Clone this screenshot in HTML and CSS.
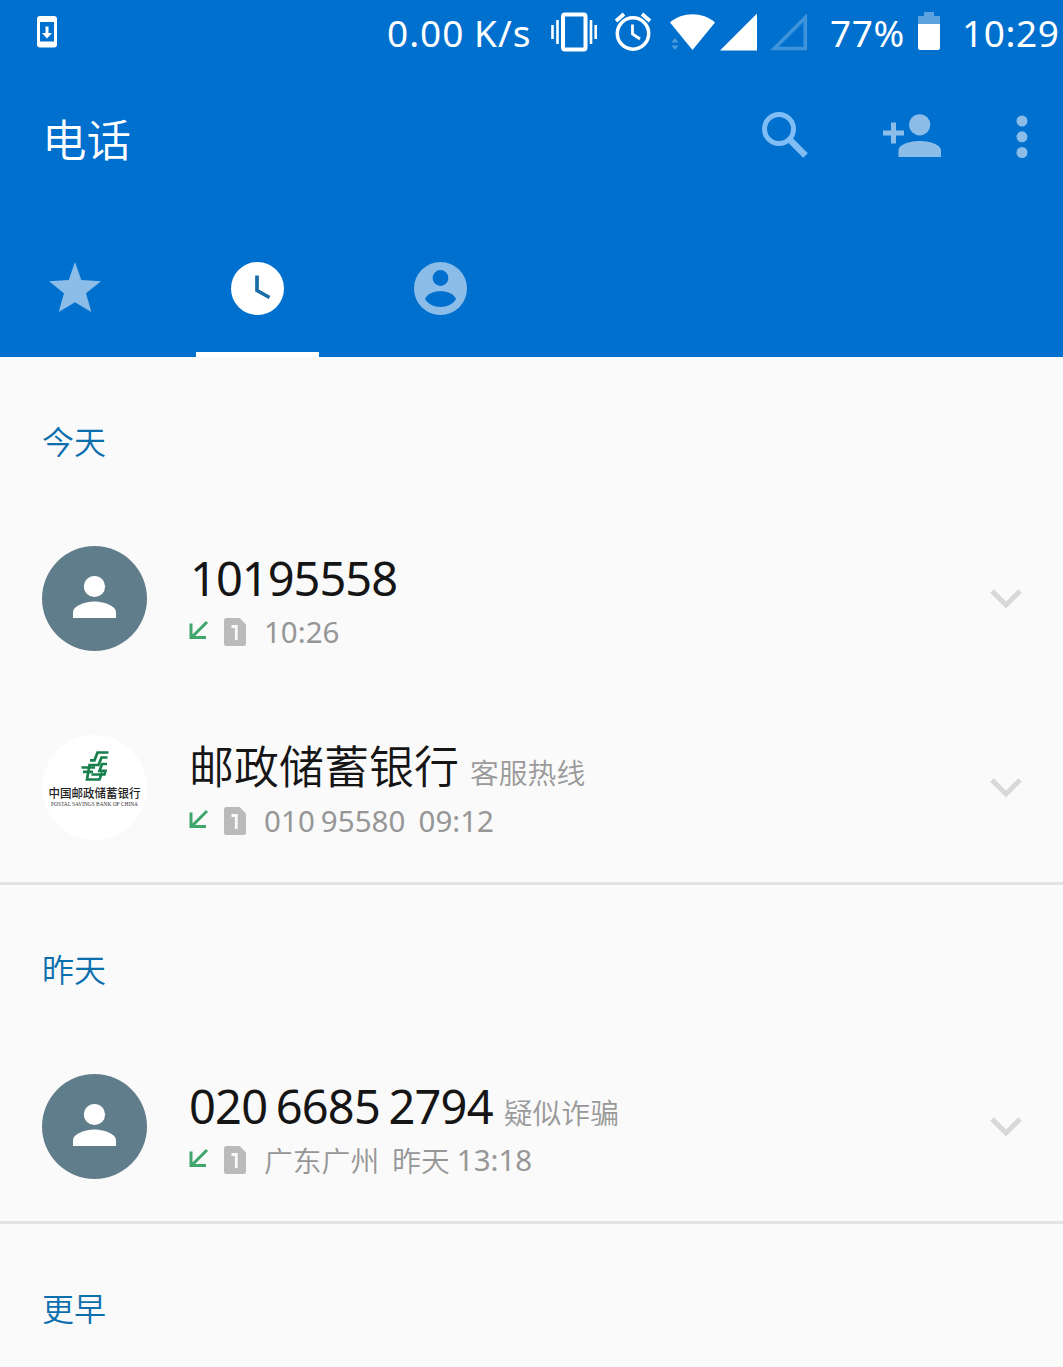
FILE: index.html
```html
<!DOCTYPE html>
<html lang="zh-CN">
<head>
<meta charset="utf-8">
<title>电话</title>
<link rel="stylesheet" href="styles.css">
</head>
<body>
<svg class="defs" aria-hidden="true">
  <symbol id="person" viewBox="0 0 105 105">
    <circle cx="52.5" cy="40.5" r="10.6"/>
    <path d="M31 72V66.500C31 59 45 55.500 52.500 55.500S74 59 74 66.500V72Z"/>
  </symbol>
  <symbol id="incoming" viewBox="0 0 20 20">
    <path d="M18 2L3 17M2 3.500V17.500H17" fill="none" stroke="#3fa66b" stroke-width="3"/>
  </symbol>
  <symbol id="sim" viewBox="0 0 22 28">
    <path d="M2.500 0H15.500L22 6.500V25.500Q22 28 19.500 28H2.500Q0 28 0 25.500V2.500Q0 0 2.500 0Z" fill="#bababa"/>
    <path d="M7.500 8.500H12.300V22" fill="none" stroke="#fafafa" stroke-width="2.800"/>
  </symbol>
  <symbol id="chevron" viewBox="0 0 32 20">
    <path d="M2 2L16 16L30 2" fill="none" stroke="#d8d8d8" stroke-width="5"/>
  </symbol>
</svg>

<header class="header">
  <div class="status">
    <svg class="st-update" width="20" height="32" viewBox="0 0 20 32"><rect width="20" height="31.500" rx="3" fill="#fff"/><rect x="3" y="6" width="14" height="19.500" fill="#0070cf"/><path d="M8.500 10.500H11.500V17H15L10 22.500L5 17H8.500Z" fill="#fff"/></svg>
    <span class="st-text st-speed">0.00 K/s</span>
    <svg class="st-vibrate" width="46" height="40" viewBox="0 0 46 40" fill="none" stroke="#fff"><rect x="12" y="2.500" width="22.500" height="35" rx="2" stroke-width="4"/><path d="M1.500 13V27M6.500 8V32M40 8V32M44.700 13V27" stroke-width="2.600"/></svg>
    <svg class="st-alarm" width="38" height="40" viewBox="0 0 38 40" fill="none" stroke="#fff"><circle cx="19" cy="21.500" r="15.700" stroke-width="3.500"/><path d="M18.500 12.500V22L26 27" stroke-width="2.800"/><path d="M2 9L10 2M28 2L36 9" stroke-width="3.800"/></svg>
    <svg class="st-wifi" width="46" height="38" viewBox="0 0 46 38"><path d="M0 9.500C12-1.500 33-1.500 45 9.500L22.500 37Z" fill="#fff"/><path d="M1.500 29.500L5 25L8.500 29.500ZM1.500 32.500H8.500L5 37Z" fill="#4c9bdc"/></svg>
    <svg class="st-sig" width="38" height="38" viewBox="0 0 38 38"><path d="M37 .5V37.500H0Z" fill="#fff"/></svg>
    <svg class="st-sig2" width="38" height="38" viewBox="0 0 38 38"><path d="M35.300 4.500V35.500H4.300Z" fill="none" stroke="#3f93db" stroke-width="3.600"/></svg>
    <span class="st-text st-pct">77%</span>
    <svg class="st-batt" width="22" height="38" viewBox="0 0 22 38"><path d="M6 0H16V4H22V12H0V4H6Z" fill="#5ba2de"/><path d="M0 12H22V36Q22 38 20 38H2Q0 38 0 36Z" fill="#fff"/></svg>
    <span class="st-text st-time">10:29</span>
  </div>
  <div class="toolbar">
    <h1 class="title">电话</h1>
    <svg class="t-search" width="47" height="47" viewBox="0 0 47 47" fill="none" stroke="#80bdf5"><circle cx="17" cy="17" r="14.500" stroke-width="5"/><path d="M28 28L43.500 43.500" stroke-width="6.500"/></svg>
    <svg class="t-add" width="58" height="44" viewBox="0 0 58 44" fill="#8bbde8"><circle cx="36.700" cy="10.800" r="10.600"/><path d="M15.500 43V36.500C15.500 30 28 27 36.700 27S58 30 58 36.500V43ZM8 8.500H13V16.500H21V21.500H13V29.500H8V21.500H0V16.500H8Z"/></svg>
    <svg class="t-more" width="12" height="44" viewBox="0 0 12 44" fill="#8bbde8"><circle cx="6" cy="6" r="5.500"/><circle cx="6" cy="21.800" r="5.500"/><circle cx="6" cy="37.500" r="5.500"/></svg>
  </div>
  <nav class="tabs">
    <div class="tab tab-star"><svg width="52" height="50" viewBox="0 0 52 50" fill="#8bbde8"><path d="M26 0L32.300 18L52 19.300L37 31.200L42.300 50L26 40.300L9.700 50L15 31.200L0 19.300L19.700 18Z"/></svg></div>
    <div class="tab tab-active"><svg width="53" height="53" viewBox="0 0 53 53"><circle cx="26.500" cy="26.500" r="26.500" fill="#fff"/><path d="M26 13.500V28.500L38.500 35.500" fill="none" stroke="#186ca8" stroke-width="3.700"/></svg></div>
    <div class="tab"><svg width="53" height="53" viewBox="0 0 53 53"><circle cx="26.500" cy="26.500" r="26.500" fill="#8bbde8"/><circle cx="26.500" cy="16" r="7.900" fill="#0070cf"/><path d="M11 37C15 26.500 38 26.500 42 37C36 47.500 17 47.500 11 37Z" fill="#0070cf"/></svg></div>
  </nav>
</header>

<main>
  <section class="group">
    <h2 class="day">今天</h2>
    <article class="call">
      <svg class="avatar avatar-person"><use href="#person"/></svg>
      <div class="info">
        <div class="name"><span class="number num-a">10195558</span></div>
        <div class="meta"><svg class="dir"><use href="#incoming"/></svg><svg class="sim"><use href="#sim"/></svg><span class="when">10:26</span></div>
      </div>
      <svg class="chevron"><use href="#chevron"/></svg>
    </article>
    <article class="call">
      <svg class="avatar avatar-bank" viewBox="0 0 105 105">
        <g fill="none" stroke="#17804d" stroke-width="2.700">
          <path d="M66.500 17.500H55.500L52.500 25.300H48"/>
          <path d="M65.500 22.500H59.500L56.500 30H47.500L45 44.500H57.500L60 37.500"/>
          <path d="M39.500 32.500H53M41 36.800H51"/>
          <path d="M65 29H60L57.500 35.800H63.500L62.500 39.500H49.500"/>
        </g>
        <text class="bank-cn" x="6.500" y="62.500" textLength="92" lengthAdjust="spacingAndGlyphs">中国邮政储蓄银行</text>
        <text class="bank-en" x="9" y="71.300" textLength="87" lengthAdjust="spacingAndGlyphs">POSTAL SAVINGS BANK OF CHINA</text>
      </svg>
      <div class="info">
        <div class="name"><span class="contact">邮政储蓄银行</span><span class="label">客服热线</span></div>
        <div class="meta"><svg class="dir"><use href="#incoming"/></svg><svg class="sim"><use href="#sim"/></svg><span class="phone">010 95580</span><span>09:12</span></div>
      </div>
      <svg class="chevron"><use href="#chevron"/></svg>
    </article>
  </section>
  <section class="group">
    <h2 class="day">昨天</h2>
    <article class="call">
      <svg class="avatar avatar-person"><use href="#person"/></svg>
      <div class="info">
        <div class="name"><span class="number num-b">020 6685 2794</span><span class="label">疑似诈骗</span></div>
        <div class="meta"><svg class="dir"><use href="#incoming"/></svg><svg class="sim"><use href="#sim"/></svg><span class="place">广东广州</span><span class="yesterday">昨天</span><span class="when">13:18</span></div>
      </div>
      <svg class="chevron"><use href="#chevron"/></svg>
    </article>
  </section>
  <section class="group">
    <h2 class="day">更早</h2>
  </section>
</main>
</body>
</html>
```
FILE: styles.css
```css
* { box-sizing: border-box; margin: 0; padding: 0; }
body {
  width: 1063px;
  height: 1367px;
  overflow: hidden;
  background: #fafafa;
  font-family: "Noto Sans", "Noto Sans CJK SC", sans-serif;
  color: #151515;
}
svg { display: block; flex: none; }
.defs { width: 0; height: 0; position: absolute; }

.header { height: 357px; background: #0070cf; color: #fff; }
.status { display: flex; height: 66px; padding-left: 37px; align-items: flex-start; }
.status svg { margin-top: 12px; }
.status .st-update { margin-top: 16px; }
.st-text { font-size: 37px; line-height: 66px; white-space: pre; flex: none; letter-spacing: 0.6px; }
.st-speed { width: 145px; margin-left: 330px; letter-spacing: 1px; word-spacing: -1px; }
.st-vibrate { margin-left: 19px; }
.st-alarm { margin-left: 17px; }
.status .st-wifi, .status .st-sig, .status .st-sig2 { margin-top: 13px; }
.st-wifi { margin-left: 18px; }
.st-sig { margin-left: 4px; }
.st-sig2 { margin-left: 12px; }
.st-pct { width: 76px; margin-left: 22px; }
.st-batt { margin-left: 12px; }
.st-time { margin-left: 22px; }

.toolbar { display: flex; height: 144px; padding-left: 42px; align-items: flex-start; }
.title { width: 720px; padding-top: 39px; font-size: 44.500px; line-height: 66px; font-weight: 350; font-family: "Noto Sans CJK SC", sans-serif; }
.t-search { margin-top: 46px; }
.t-add { margin: 48px 0 0 74px; }
.t-more { margin: 49px 0 0 75px; }

.tabs { display: flex; height: 147px; padding-left: 13px; }
.tab { width: 123px; margin-right: 60px; padding-top: 52px; display: flex; justify-content: center; }
.tab-active { border-bottom: 5px solid #fff; }

.day { height: 147px; padding: 58px 0 0 42px; font-size: 32px; line-height: 50px; font-weight: 350; color: #0b6fae; font-family: "Noto Sans CJK SC", sans-serif; }
.group { border-bottom: 3px solid #e3e3e3; }
.call { display: flex; height: 189px; padding: 0 41px 0 42px; align-items: center; }
.avatar { width: 105px; height: 105px; border-radius: 50%; }
.avatar-person { background: #607d8b; fill: #fff; }
.avatar-bank { background: #fff; }
.bank-cn { font: 500 12px "Noto Sans CJK SC", sans-serif; fill: #222; }
.bank-en { font: 5.500px "Liberation Serif", serif; fill: #333; }
.info { width: 800px; height: 189px; padding-top: 47px; margin-left: 42px; }
.name { display: flex; height: 54px; align-items: baseline; line-height: 54px; white-space: pre; }
.number { font-size: 47px; }
.num-a { letter-spacing: -1px; margin-left: 1px; }
.num-b { letter-spacing: -0.8px; word-spacing: -3px; }
.contact { font-size: 45px; font-weight: 350; }
.label { margin-left: 11px; font-size: 28.800px; font-weight: 350; color: #999; }
.meta { display: flex; height: 54px; align-items: center; font-size: 29.500px; line-height: 54px; color: #969696; white-space: pre; }
.dir { width: 20px; height: 20px; margin-top: -4px; }
.sim { width: 22px; height: 28px; margin: 0 18px 0 15px; }
.phone, .place { margin-right: 13px; }
.phone { letter-spacing: 0.1px; word-spacing: -2px; }
.place, .yesterday { font-size: 28.800px; font-weight: 350; padding-top: 1px; }
.yesterday { margin-right: 7px; }
.chevron { width: 32px; height: 20px; margin-left: auto; }
```
